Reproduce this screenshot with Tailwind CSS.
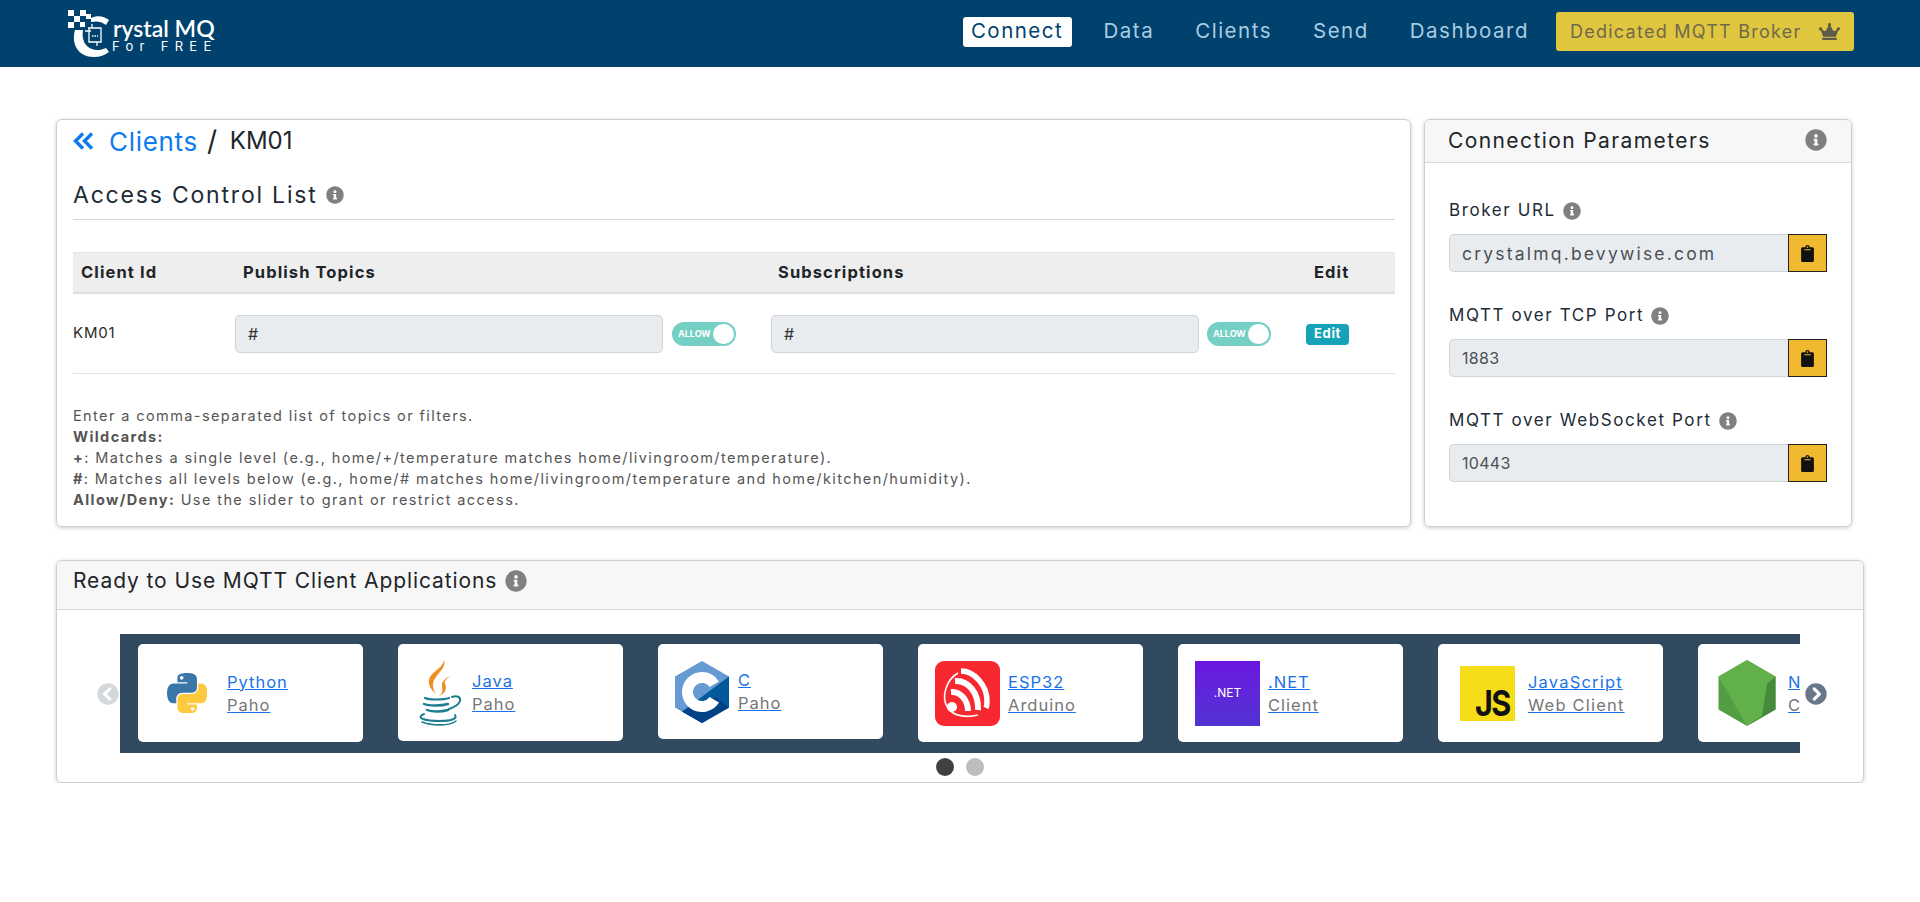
<!DOCTYPE html>
<html lang="en">
 <head>
  <meta charset="UTF-8"/>
  <meta name="viewport" content="width=device-width, initial-scale=1.0"/>
  <title>Crystal MQ - Access Control List</title>
  <script src="https://cdn.jsdelivr.net/npm/@tailwindcss/browser@4"></script>
 </head>
 <body class="bg-white font-['Inter',sans-serif] text-[#212529] overflow-hidden">
  <!-- Navbar -->
  <nav class="h-[67px] bg-[#00426d] flex items-center justify-between pl-[68px] pr-[66px]">
   <a class="block w-[150px] h-[50px] relative" href="#">
    <svg class="absolute left-0 top-0" width="46" height="50" viewBox="0 0 46 50">
     <g fill="#fff">
      <rect x="0" y="1" width="6" height="6"/><rect x="6" y="7" width="6" height="6"/><rect x="12" y="1" width="6" height="6"/><rect x="0" y="13" width="6" height="6"/><rect x="12" y="13" width="5" height="5"/><rect x="18" y="5" width="5" height="5"/>
     </g>
     <path d="M23 9C29 6 36 7 41 11L38 16C33 12 28 12 23 13Z M7 21C3 35 10 48 26 48C32 48 37 46 41 43L38 39C32 42 24 42 19 37C15 33 14 27 15 21Z" fill="#fff"/>
     <path d="M20 19h13v14h-12v-14M17 22h6M29 33v4M24 15v4" fill="none" stroke="#fff" stroke-width="1.300"/>
     <path d="M24 27h6" stroke="#fff" stroke-width="1.500" stroke-dasharray="1.500 1"/>
    </svg>
    <span class="absolute left-[45px] top-[8px] text-[23px] leading-[22px] font-semibold text-white font-['Lato',sans-serif] whitespace-nowrap">rystal MQ</span>
    <span class="absolute left-[44px] top-[30px] text-[13px] leading-[14px] tracking-[6.300px] text-white whitespace-nowrap">For FREE</span>
   </a>
   <div class="-mt-[4px] flex items-center text-[20.500px] tracking-[1.500px] text-[#a8cde2]">
    <a class="w-[109px] h-[30px] rounded-[3px] bg-white text-[#00426d] flex items-center justify-center" href="#">Connect</a>
    <a class="ml-[32px]" href="#">Data</a>
    <a class="ml-[41px]" href="#">Clients</a>
    <a class="ml-[41px]" href="#">Send</a>
    <a class="ml-[41px]" href="#">Dashboard</a>
    <a class="ml-[27px] w-[298px] h-[39px] rounded-[3px] bg-[#e0c63f] text-[#6f6a4c] text-[18px] tracking-[1.250px] flex items-center pl-[14px] gap-[17px]" href="#">
     Dedicated MQTT Broker
     <svg width="21" height="17" viewBox="0 0 640 512" fill="#5f5b4a"><path d="M528 448H112c-8.800 0-16 7.200-16 16v32c0 8.800 7.200 16 16 16h416c8.800 0 16-7.200 16-16v-32c0-8.800-7.200-16-16-16zm64-320c-26.500 0-48 21.500-48 48 0 7.100 1.600 13.700 4.400 19.800L476 239.200c-15.400 9.200-35.300 4-44.200-11.600L350.300 85C361 76.200 368 63 368 48c0-26.500-21.500-48-48-48s-48 21.500-48 48c0 15 7 28.200 17.700 37l-81.500 142.600c-8.900 15.600-28.900 20.800-44.200 11.600l-72.300-43.400c2.700-6 4.400-12.700 4.400-19.800 0-26.500-21.500-48-48-48S0 149.500 0 176s21.500 48 48 48c2.600 0 5.200-.4 7.700-.8L128 416h384l72.300-192.800c2.500.4 5.100.8 7.700.8 26.500 0 48-21.500 48-48s-21.500-48-48-48z"/></svg>
    </a>
   </div>
  </nav>

  <main class="pt-[52px] pl-[56px]">
   <div class="flex gap-[13px]">
    <!-- Access control card -->
    <section class="w-[1355px] h-[408px] border border-[#cfcfcf] rounded-[6px] shadow-[0_1px_4px_rgba(0,0,0,0.2)] pl-[16px] pr-[15px]">
     <div class="h-[42px] flex items-center text-[26px] tracking-[0.700px]">
      <svg class="mr-[15px]" width="21" height="18" viewBox="0 0 21 18" fill="none" stroke="#0d7bf0" stroke-width="3.400"><path d="M10 1.500 2.500 9l7.500 7.500M19 1.500 11.500 9l7.500 7.500"/></svg>
      <a class="text-[#0d7bf0]" href="#">Clients</a>
      <span class="ml-[9px] text-[28px] text-[#212529]">/</span>
      <span class="ml-[12px] text-[24px] tracking-normal text-[#212529]">KM01</span>
     </div>
     <div class="mt-[17px] h-[32px] flex items-center gap-[8px] text-[23px] tracking-[1.800px] text-[#212b36]">
      Access Control List
      <svg width="18" height="18" viewBox="0 0 512 512" fill="#808080"><path d="M256 8C119.043 8 8 119.083 8 256c0 136.997 111.043 248 248 248s248-111.003 248-248C504 119.083 392.957 8 256 8zm0 110c23.196 0 42 18.804 42 42s-18.804 42-42 42-42-18.804-42-42 18.804-42 42-42zm56 254c0 6.627-5.373 12-12 12h-88c-6.627 0-12-5.373-12-12v-24c0-6.627 5.373-12 12-12h12v-64h-12c-6.627 0-12-5.373-12-12v-24c0-6.627 5.373-12 12-12h64c6.627 0 12 5.373 12 12v100h12c6.627 0 12 5.373 12 12v24z"/></svg>
     </div>
     <div class="mt-[8px] border-b border-[#d5d5d5]"></div>
     <!-- Table -->
     <div class="mt-[32px] h-[42px] grid grid-cols-[162px_536px_535px_89px] items-center bg-[#eeeeee] border-t border-t-[#e4e4e4] border-b-2 border-b-[#e0e0e0] text-[16.500px] font-bold tracking-[1.100px] text-[#212529]">
      <div class="pl-2">Client Id</div>
      <div class="pl-2">Publish Topics</div>
      <div class="pl-[7px]">Subscriptions</div>
      <div class="pl-2">Edit</div>
     </div>
     <div class="h-[80px] grid grid-cols-[162px_536px_535px_89px] items-center border-b border-[#e2e2e2] text-[15px] tracking-[0.800px]">
      <div class="text-[#2b2b2b]">KM01</div>
      <div class="flex items-center gap-[9px]">
       <input class="w-[428px] h-[38px] rounded-[5px] border border-[#ced4da] bg-[#e9ecef] pl-[12px] text-[16px] text-[#333]" value="#" readonly/>
       <div class="w-[64px] h-[24px] rounded-full bg-[#74cfc4] flex items-center justify-between pl-[6px] pr-[2px]">
        <span class="text-[9px] font-bold text-white tracking-normal">ALLOW</span>
        <span class="w-[21px] h-[20px] rounded-full bg-white"></span>
       </div>
      </div>
      <div class="flex items-center gap-[8px]">
       <input class="w-[428px] h-[38px] rounded-[5px] border border-[#ced4da] bg-[#e9ecef] pl-[12px] text-[16px] text-[#333]" value="#" readonly/>
       <div class="w-[64px] h-[24px] rounded-full bg-[#74cfc4] flex items-center justify-between pl-[6px] pr-[2px]">
        <span class="text-[9px] font-bold text-white tracking-normal">ALLOW</span>
        <span class="w-[21px] h-[20px] rounded-full bg-white"></span>
       </div>
      </div>
      <div>
       <button class="w-[43px] h-[21px] rounded-[4px] bg-[#17a2b8] text-white text-[13px] font-bold tracking-[0.600px]">Edit</button>
      </div>
     </div>
     <div class="mt-[31px] text-[14.500px] leading-[21px] tracking-[1.400px] text-[#555]">
      <p>Enter a comma-separated list of topics or filters.</p>
      <p class="font-bold">Wildcards:</p>
      <p><b>+</b>: Matches a single level (e.g., home/+/temperature matches home/livingroom/temperature).</p>
      <p><b>#</b>: Matches all levels below (e.g., home/# matches home/livingroom/temperature and home/kitchen/humidity).</p>
      <p><b>Allow/Deny:</b> Use the slider to grant or restrict access.</p>
     </div>
    </section>

    <!-- Connection parameters card -->
    <section class="w-[428px] h-[408px] border border-[#cfcfcf] rounded-[6px] shadow-[0_1px_4px_rgba(0,0,0,0.2)] overflow-hidden">
     <div class="h-[43px] bg-[#f7f7f7] border-b border-[#d8d8d8] flex items-center justify-between pl-[23px] pr-[24px]">
      <span class="text-[21px] tracking-[1.400px] text-[#212529]">Connection Parameters</span>
      <svg class="-mt-[3px]" width="22" height="22" viewBox="0 0 512 512" fill="#808080"><path d="M256 8C119.043 8 8 119.083 8 256c0 136.997 111.043 248 248 248s248-111.003 248-248C504 119.083 392.957 8 256 8zm0 110c23.196 0 42 18.804 42 42s-18.804 42-42 42-42-18.804-42-42 18.804-42 42-42zm56 254c0 6.627-5.373 12-12 12h-88c-6.627 0-12-5.373-12-12v-24c0-6.627 5.373-12 12-12h12v-64h-12c-6.627 0-12-5.373-12-12v-24c0-6.627 5.373-12 12-12h64c6.627 0 12 5.373 12 12v100h12c6.627 0 12 5.373 12 12v24z"/></svg>
     </div>
     <div class="pl-[24px] pr-[22px] pt-[36px] flex flex-col gap-[32px]">
      <div>
       <div class="h-[24px] flex items-center gap-[7px] text-[17px] tracking-[1.600px] text-[#212b36]">
        Broker URL
        <svg width="18" height="18" viewBox="0 0 512 512" fill="#808080"><path d="M256 8C119.043 8 8 119.083 8 256c0 136.997 111.043 248 248 248s248-111.003 248-248C504 119.083 392.957 8 256 8zm0 110c23.196 0 42 18.804 42 42s-18.804 42-42 42-42-18.804-42-42 18.804-42 42-42zm56 254c0 6.627-5.373 12-12 12h-88c-6.627 0-12-5.373-12-12v-24c0-6.627 5.373-12 12-12h12v-64h-12c-6.627 0-12-5.373-12-12v-24c0-6.627 5.373-12 12-12h64c6.627 0 12 5.373 12 12v100h12c6.627 0 12 5.373 12 12v24z"/></svg>
       </div>
       <div class="mt-[11px] flex h-[38px]">
        <input class="w-[339px] h-[38px] rounded-l-[5px] border border-r-0 border-[#ced4da] bg-[#e9ecef] pl-[12px] text-[17.500px] tracking-[2.200px] text-[#495057]" value="crystalmq.bevywise.com" readonly/>
        <button class="w-[39px] h-[38px] bg-[#f0b92f] border border-[#222] flex items-center justify-center">
         <svg width="13" height="17" viewBox="0 0 384 512" fill="#111"><path d="M384 112v352c0 26.510-21.490 48-48 48H48c-26.510 0-48-21.490-48-48V112c0-26.510 21.490-48 48-48h80c0-35.290 28.710-64 64-64s64 28.710 64 64h80c26.510 0 48 21.490 48 48zM192 40c-13.255 0-24 10.745-24 24s10.745 24 24 24 24-10.745 24-24-10.745-24-24-24m96 114v-20a6 6 0 0 0-6-6H102a6 6 0 0 0-6 6v20a6 6 0 0 0 6 6h180a6 6 0 0 0 6-6z"/></svg>
        </button>
       </div>
      </div>
      <div>
       <div class="h-[24px] flex items-center gap-[7px] text-[17px] tracking-[1.600px] text-[#212b36]">
        MQTT over TCP Port
        <svg width="18" height="18" viewBox="0 0 512 512" fill="#808080"><path d="M256 8C119.043 8 8 119.083 8 256c0 136.997 111.043 248 248 248s248-111.003 248-248C504 119.083 392.957 8 256 8zm0 110c23.196 0 42 18.804 42 42s-18.804 42-42 42-42-18.804-42-42 18.804-42 42-42zm56 254c0 6.627-5.373 12-12 12h-88c-6.627 0-12-5.373-12-12v-24c0-6.627 5.373-12 12-12h12v-64h-12c-6.627 0-12-5.373-12-12v-24c0-6.627 5.373-12 12-12h64c6.627 0 12 5.373 12 12v100h12c6.627 0 12 5.373 12 12v24z"/></svg>
       </div>
       <div class="mt-[11px] flex h-[38px]">
        <input class="w-[339px] h-[38px] rounded-l-[5px] border border-r-0 border-[#ced4da] bg-[#e9ecef] pl-[12px] text-[16px] tracking-[0.300px] text-[#495057]" value="1883" readonly/>
        <button class="w-[39px] h-[38px] bg-[#f0b92f] border border-[#222] flex items-center justify-center">
         <svg width="13" height="17" viewBox="0 0 384 512" fill="#111"><path d="M384 112v352c0 26.510-21.490 48-48 48H48c-26.510 0-48-21.490-48-48V112c0-26.510 21.490-48 48-48h80c0-35.290 28.710-64 64-64s64 28.710 64 64h80c26.510 0 48 21.490 48 48zM192 40c-13.255 0-24 10.745-24 24s10.745 24 24 24 24-10.745 24-24-10.745-24-24-24m96 114v-20a6 6 0 0 0-6-6H102a6 6 0 0 0-6 6v20a6 6 0 0 0 6 6h180a6 6 0 0 0 6-6z"/></svg>
        </button>
       </div>
      </div>
      <div>
       <div class="h-[24px] flex items-center gap-[7px] text-[17px] tracking-[1.600px] text-[#212b36]">
        MQTT over WebSocket Port
        <svg width="18" height="18" viewBox="0 0 512 512" fill="#808080"><path d="M256 8C119.043 8 8 119.083 8 256c0 136.997 111.043 248 248 248s248-111.003 248-248C504 119.083 392.957 8 256 8zm0 110c23.196 0 42 18.804 42 42s-18.804 42-42 42-42-18.804-42-42 18.804-42 42-42zm56 254c0 6.627-5.373 12-12 12h-88c-6.627 0-12-5.373-12-12v-24c0-6.627 5.373-12 12-12h12v-64h-12c-6.627 0-12-5.373-12-12v-24c0-6.627 5.373-12 12-12h64c6.627 0 12 5.373 12 12v100h12c6.627 0 12 5.373 12 12v24z"/></svg>
       </div>
       <div class="mt-[11px] flex h-[38px]">
        <input class="w-[339px] h-[38px] rounded-l-[5px] border border-r-0 border-[#ced4da] bg-[#e9ecef] pl-[12px] text-[16px] tracking-[0.300px] text-[#495057]" value="10443" readonly/>
        <button class="w-[39px] h-[38px] bg-[#f0b92f] border border-[#222] flex items-center justify-center">
         <svg width="13" height="17" viewBox="0 0 384 512" fill="#111"><path d="M384 112v352c0 26.510-21.490 48-48 48H48c-26.510 0-48-21.490-48-48V112c0-26.510 21.490-48 48-48h80c0-35.290 28.710-64 64-64s64 28.710 64 64h80c26.510 0 48 21.490 48 48zM192 40c-13.255 0-24 10.745-24 24s10.745 24 24 24 24-10.745 24-24-10.745-24-24-24m96 114v-20a6 6 0 0 0-6-6H102a6 6 0 0 0-6 6v20a6 6 0 0 0 6 6h180a6 6 0 0 0 6-6z"/></svg>
        </button>
       </div>
      </div>
     </div>
    </section>
   </div>

   <!-- Client applications card -->
   <section class="mt-[33px] w-[1808px] h-[223px] border border-[#cfcfcf] rounded-[6px] shadow-[0_1px_4px_rgba(0,0,0,0.2)] overflow-hidden">
    <div class="h-[49px] bg-[#f7f7f7] border-b border-[#d8d8d8] flex items-center gap-[8px] pl-[16px] pb-[8px]">
     <span class="text-[21px] tracking-[0.900px] text-[#212529]">Ready to Use MQTT Client Applications</span>
     <svg width="22" height="22" viewBox="0 0 512 512" fill="#808080"><path d="M256 8C119.043 8 8 119.083 8 256c0 136.997 111.043 248 248 248s248-111.003 248-248C504 119.083 392.957 8 256 8zm0 110c23.196 0 42 18.804 42 42s-18.804 42-42 42-42-18.804-42-42 18.804-42 42-42zm56 254c0 6.627-5.373 12-12 12h-88c-6.627 0-12-5.373-12-12v-24c0-6.627 5.373-12 12-12h12v-64h-12c-6.627 0-12-5.373-12-12v-24c0-6.627 5.373-12 12-12h64c6.627 0 12 5.373 12 12v100h12c6.627 0 12 5.373 12 12v24z"/></svg>
    </div>
    <div class="mt-[24px] flex items-center pl-[40px]">
     <svg class="shrink-0" width="22" height="22" viewBox="0 0 512 512" fill="#d5d8db"><path d="M256 504C119 504 8 393 8 256S119 8 256 8s248 111 248 248-111 248-248 248zM142.100 273l135.500 135.500c9.400 9.400 24.600 9.400 33.900 0l17-17c9.400-9.400 9.400-24.600 0-33.900L226.900 256l101.600-101.600c9.400-9.400 9.400-24.600 0-33.900l-17-17c-9.400-9.400-24.600-9.400-33.900 0L142.100 239c-9.400 9.400-9.400 24.600 0 34z"/></svg>
     <div class="ml-[1px] w-[1680px] h-[119px] bg-[#324a5f] overflow-hidden flex items-start gap-[35px] pt-[10px] pl-[18px] shrink-0">
      <!-- Python -->
      <a class="w-[225px] h-[98px] shrink-0 rounded-[5px] bg-white flex items-center pl-[29px] gap-[20px]" href="#">
       <svg class="shrink-0" width="40" height="40" viewBox="0 0 110 110"><path fill="#3a76a8" d="M54.919 0c-4.584.022-8.961.413-12.813 1.095C30.760 3.099 28.700 7.295 28.700 15.032v10.219h26.813v3.406H18.638c-7.793 0-14.616 4.684-16.750 13.594-2.462 10.213-2.571 16.586 0 27.250 1.905 7.938 6.457 13.594 14.250 13.594h9.218v-12.250c0-8.850 7.657-16.656 16.750-16.656h26.782c7.454 0 13.406-6.138 13.406-13.625v-25.531c0-7.266-6.130-12.725-13.406-13.937C64.282.328 59.502-.020 54.918 0zM40.419 8.218c2.770 0 5.031 2.299 5.031 5.125 0 2.816-2.262 5.094-5.031 5.094-2.780 0-5.031-2.278-5.031-5.094 0-2.826 2.252-5.125 5.031-5.125z"/><path fill="#fdc93f" d="M85.638 28.657v11.906c0 9.231-7.826 17-16.750 17H42.106c-7.336 0-13.406 6.278-13.406 13.625v25.531c0 7.266 6.319 11.540 13.406 13.625 8.488 2.496 16.627 2.947 26.782 0 6.750-1.954 13.406-5.888 13.406-13.625V86.501H55.513v-3.406h40.188c7.793 0 10.696-5.436 13.406-13.594 2.799-8.399 2.680-16.476 0-27.250-1.926-7.757-5.604-13.594-13.406-13.594zM70.575 93.313c2.780 0 5.031 2.278 5.031 5.094 0 2.826-2.252 5.125-5.031 5.125-2.770 0-5.031-2.299-5.031-5.125 0-2.816 2.262-5.094 5.031-5.094z"/></svg>
       <div class="flex flex-col gap-[1px] text-[16.500px] leading-[22px] tracking-[1px] underline decoration-[#1a73e8]">
        <span class="text-[#1a73e8]">Python</span><span class="text-[#777]">Paho</span>
       </div>
      </a>
      <!-- Java -->
      <a class="w-[225px] h-[97px] shrink-0 rounded-[5px] bg-white flex items-center pl-[18px] gap-[9px]" href="#">
       <svg class="shrink-0" width="47" height="66" viewBox="0 0 47 66">
        <path d="M28 0c3 9-10 15-11 24-.5 5 2 8 3 10-6-5-9-11-6-17C17 11 27 8 28 0Z" fill="#ee8f22"/>
        <path d="M36 15c-6 3-11 6-10 12 1 4 0 7-3 9 7-3 8-8 6-12-1-3 2-6 7-9Z" fill="#ee8f22"/>
        <g fill="none" stroke="#1c7f90" stroke-linecap="round">
         <path d="M9 38c4 2 18 2 24 0" stroke-width="2.200"/>
         <path d="M36 37c5-2 9 0 8 4-1 3-5 6-11 8" stroke-width="2"/>
         <path d="M8 44c5 2 17 2 24 0" stroke-width="2.400"/>
         <path d="M11 50c5 2 14 2 21 0" stroke-width="2.400"/>
         <path d="M8 54c-9 4 1 7 16 7 10 0 18-2 15-6" stroke-width="2"/>
         <path d="M6 62c10 4 28 4 34-1" stroke-width="1.600"/>
        </g>
       </svg>
       <div class="flex flex-col gap-[1px] text-[16.500px] leading-[22px] tracking-[1px] underline decoration-[#1a73e8]">
        <span class="text-[#1a73e8]">Java</span><span class="text-[#777]">Paho</span>
       </div>
      </a>
      <!-- C -->
      <a class="w-[225px] h-[95px] shrink-0 rounded-[5px] bg-white flex items-center pl-[16px] gap-[8px]" href="#">
       <svg class="shrink-0" width="56" height="62" viewBox="0 0 56 62">
        <path d="M28 0 55 15.500v31L28 62 1 46.500v-31Z" fill="#659ad2"/>
        <path d="M55 15.500v31L28 62 8 50.500 55 15.500Z" fill="#03599c"/>
        <path d="M8 50.500 28 62 55 46.500 42 36 Z" fill="#004283"/>
        <path d="M28 11a20 20 0 1 0 17 30.500l-9.500-5.500a9 9 0 1 1 0-10l9.500-5.500A20 20 0 0 0 28 11Z" fill="#fff"/>
       </svg>
       <div class="flex flex-col gap-[1px] text-[16.500px] leading-[22px] tracking-[1px] underline decoration-[#1a73e8]">
        <span class="text-[#1a73e8]">C</span><span class="text-[#777]">Paho</span>
       </div>
      </a>
      <!-- ESP32 -->
      <a class="w-[225px] h-[98px] shrink-0 rounded-[5px] bg-white flex items-center pl-[17px] gap-[8px]" href="#">
       <svg class="shrink-0" width="65" height="65" viewBox="0 0 65 65">
        <rect width="65" height="65" rx="9" fill="#f7282f"/>
        <g fill="none" stroke="#fff" stroke-linecap="butt">
         <path d="M23 12C12 18 5 36 13 47c5 8 18 10 30 7" stroke-width="1.600"/>
         <path d="M26 10c13 0 26 14 26 30 0 3 0 5-1 7" stroke-width="5.500"/>
         <path d="M20 20c13-1 24 12 23 29" stroke-width="6"/>
         <path d="M16 31c9-1 17 8 17 19" stroke-width="6"/>
        </g>
        <circle cx="17" cy="46" r="5" fill="#fff"/>
       </svg>
       <div class="flex flex-col gap-[1px] text-[16.500px] leading-[22px] tracking-[1px] underline decoration-[#1a73e8]">
        <span class="text-[#1a73e8]">ESP32</span><span class="text-[#777]">Arduino</span>
       </div>
      </a>
      <!-- .NET -->
      <a class="w-[225px] h-[98px] shrink-0 rounded-[5px] bg-white flex items-center pl-[17px] gap-[8px]" href="#">
       <div class="w-[65px] h-[65px] shrink-0 bg-gradient-to-b from-[#6a14e0] to-[#5232d2] flex items-center justify-center text-white text-[12px]">.NET</div>
       <div class="flex flex-col gap-[1px] text-[16.500px] leading-[22px] tracking-[1px] underline decoration-[#1a73e8]">
        <span class="text-[#1a73e8]">.NET</span><span class="text-[#777]">Client</span>
       </div>
      </a>
      <!-- JavaScript -->
      <a class="w-[225px] h-[98px] shrink-0 rounded-[5px] bg-white flex items-center pl-[22px] gap-[13px]" href="#">
       <div class="w-[55px] h-[55px] shrink-0 bg-[#f5de19] flex items-end justify-end pr-[5px] pb-[4px]">
        <span class="text-[#111] text-[36px] leading-[27px] font-bold tracking-[-2px] origin-right scale-x-[.85]">JS</span>
       </div>
       <div class="flex flex-col gap-[1px] text-[16.500px] leading-[22px] tracking-[1.200px] underline decoration-[#1a73e8]">
        <span class="text-[#1a73e8]">JavaScript</span><span class="text-[#777]">Web Client</span>
       </div>
      </a>
      <!-- Node -->
      <a class="w-[225px] h-[98px] shrink-0 rounded-[5px] bg-white flex items-center pl-[20px] gap-[12px]" href="#">
       <svg class="shrink-0" width="58" height="66" viewBox="0 0 58 66">
        <path d="M29 0 57.500 16.500v33L29 66 .500 49.500v-33Z" fill="#539e43"/>
        <path d="M29 0 57.500 16.500 44 56 29 66 .500 16.500Z" fill="#6bbd4e" opacity=".6"/>
        <path d="M57.500 16.500v33L29 66l15-10 5-32Z" fill="#448a3a"/>
       </svg>
       <div class="flex flex-col gap-[1px] text-[16.500px] leading-[22px] tracking-[1px] underline decoration-[#1a73e8]">
        <span class="text-[#1a73e8]">NodeJS</span><span class="text-[#777]">Client</span>
       </div>
      </a>
     </div>
     <svg class="ml-[5px] shrink-0" width="22" height="22" viewBox="0 0 512 512" fill="#68778a"><path d="M256 8c137 0 248 111 248 248S393 504 256 504 8 393 8 256 119 8 256 8zm113.900 231L234.400 103.500c-9.400-9.400-24.600-9.400-33.900 0l-17 17c-9.400 9.400-9.400 24.600 0 33.900L285.100 256 183.500 357.600c-9.400 9.400-9.400 24.600 0 33.900l17 17c9.400 9.400 24.600 9.400 33.900 0L369.900 273c9.400-9.400 9.400-24.600 0-34z"/></svg>
    </div>
    <div class="mt-[5px] flex justify-center gap-[12px] pr-[1px]">
     <span class="w-[18px] h-[18px] rounded-full bg-[#404040]"></span>
     <span class="w-[18px] h-[18px] rounded-full bg-[#bdbdbd]"></span>
    </div>
   </section>
  </main>
 </body>
</html>
